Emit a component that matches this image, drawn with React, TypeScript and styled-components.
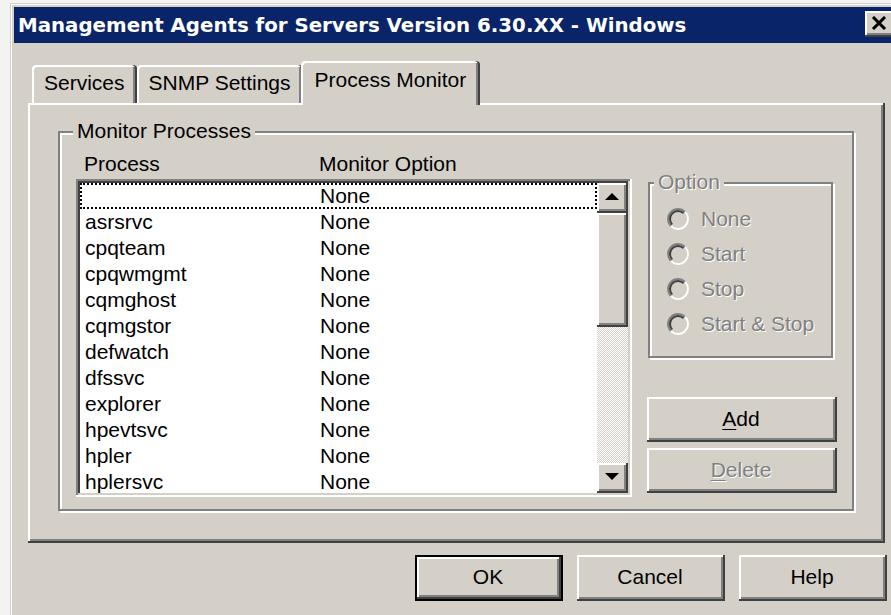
import React from "react";
import styled, { createGlobalStyle, css } from "styled-components";

const FACE = "#d4d0c8";
const SHADOW = "#808080";
const DARK = "#404040";
const HI = "#ffffff";

const GlobalStyle = createGlobalStyle`
  html, body {
    margin: 0;
    padding: 0;
    background: #f3f3f1;
    overflow: hidden;
  }
  #root {
    width: 891px;
    height: 615px;
    overflow: hidden;
  }
`;

const raised = css`
  box-shadow: inset -2px -2px 0 ${DARK}, inset 2px 2px 0 ${HI},
    inset -4px -4px 0 ${SHADOW};
`;

const sunken = css`
  box-shadow: inset -2px -2px 0 ${HI}, inset 2px 2px 0 ${SHADOW},
    inset -4px -4px 0 ${FACE}, inset 4px 4px 0 ${DARK};
`;

const disabledText = css`
  color: ${SHADOW};
  text-shadow: 1px 1px 0 ${HI};
`;

const Window = styled.div`
  box-sizing: border-box;
  margin: 3px 0 0 10px;
  width: 891px;
  height: 640px;
  padding: 4px;
  background: ${FACE};
  box-shadow: inset 1px 1px 0 ${FACE}, inset 2px 2px 0 ${HI};
  display: flex;
  flex-direction: column;
  font-family: "Liberation Sans", Arial, sans-serif;
  font-size: 21px;
  color: #000;
`;

const TitleBar = styled.div`
  flex: none;
  height: 36px;
  background: #0a246a;
  display: flex;
  align-items: flex-start;
  padding: 0 2px 0 4px;
`;

const TitleText = styled.span`
  flex: 1;
  align-self: center;
  color: #fff;
  font-family: "DejaVu Sans", Verdana, sans-serif;
  font-weight: bold;
  font-size: 19.8px;
  white-space: nowrap;
  overflow: hidden;
`;

const CloseButton = styled.div`
  flex: none;
  box-sizing: border-box;
  width: 30px;
  height: 26px;
  margin-top: 4px;
  background: ${FACE};
  ${raised};
  display: flex;
  align-items: center;
  justify-content: center;
  padding: 0 2px 2px 0;
`;

const Body = styled.div`
  flex: 1;
  display: flex;
  flex-direction: column;
  padding: 18px 10px 0 14px;
`;

const TabStrip = styled.div`
  height: 42px;
  display: flex;
  align-items: flex-end;
  padding-left: 4px;
`;

const Tab = styled.div<{ $active?: boolean }>`
  position: relative;
  z-index: ${(p) => (p.$active ? 2 : 1)};
  box-sizing: border-box;
  height: ${(p) => (p.$active ? 44 : 38)}px;
  margin: 0 ${(p) => (p.$active ? -2 : 0)}px ${(p) => (p.$active ? -2 : 0)}px;
  padding: 0 ${(p) => (p.$active ? 14 : 12)}px ${(p) => (p.$active ? 6 : 2)}px;
  background: ${FACE};
  border-radius: 4px 4px 0 0;
  box-shadow: inset -2px 0 0 ${DARK}, inset 2px 2px 0 ${HI},
    inset -4px 0 0 ${SHADOW};
  display: flex;
  align-items: center;
  justify-content: center;
  white-space: nowrap;
`;

const Panel = styled.div`
  box-sizing: border-box;
  height: 440px;
  margin-right: 2px;
  padding: 28px 0 0 30px;
  background: ${FACE};
  ${raised};
`;

const GroupBox = styled.div<{ $w: number; $h: number }>`
  position: relative;
  box-sizing: border-box;
  width: ${(p) => p.$w}px;
  height: ${(p) => p.$h}px;
  border: 2px solid ${SHADOW};
  box-shadow: 2px 2px 0 ${HI}, inset 2px 2px 0 ${HI};
`;

const GroupLabel = styled.span<{ $disabled?: boolean }>`
  position: absolute;
  top: -14px;
  left: ${(p) => (p.$disabled ? 4 : 13)}px;
  padding: 0 4px;
  line-height: 24px;
  background: ${FACE};
  white-space: nowrap;
  ${(p) => p.$disabled && disabledText};
`;

const ProcessArea = styled.div`
  display: grid;
  grid-template-columns: 556px 190px;
  grid-template-rows: auto 1fr;
  column-gap: 15px;
  padding: 19px 0 0 16px;
`;

const HeaderRow = styled.div`
  grid-column: 1 / 3;
  display: grid;
  grid-template-columns: 235px 1fr;
  padding-left: 8px;
  height: 24px;
  line-height: 24px;
  margin-bottom: 3px;
`;

const ListBox = styled.div`
  box-sizing: border-box;
  height: 318px;
  padding: 4px;
  background: #fff;
  ${sunken};
  display: flex;
`;

const Rows = styled.div`
  flex: 1;
  overflow: hidden;
`;

const Row = styled.div<{ $focused?: boolean }>`
  box-sizing: border-box;
  height: 26px;
  line-height: 26px;
  display: grid;
  grid-template-columns: 235px 1fr;
  padding-left: 5px;
  white-space: nowrap;
  ${(p) =>
    p.$focused &&
    css`
      outline: 2px dotted #000;
      outline-offset: -2px;
    `};
`;

const ScrollBar = styled.div`
  flex: none;
  width: 31px;
  display: flex;
  flex-direction: column;
  background-color: ${HI};
  background-image: repeating-conic-gradient(${FACE} 0 25%, ${HI} 0 50%);
  background-size: 2px 2px;
`;

const ScrollButton = styled.div`
  flex: none;
  box-sizing: border-box;
  height: 30px;
  background: ${FACE};
  ${raised};
  display: flex;
  align-items: center;
  justify-content: center;
  padding: 0 2px 2px 0;
`;

const Thumb = styled.div`
  flex: none;
  height: 114px;
  background: ${FACE};
  ${raised};
`;

const Track = styled.div`
  flex: 1;
`;

const SideColumn = styled.div`
  display: flex;
  flex-direction: column;
  padding-bottom: 4px;
`;

const OptionBox = styled(GroupBox)`
  margin: 3px 0 0 1px;
  padding: 17px 0 0 17px;
`;

const RadioRow = styled.div`
  height: 35px;
  display: flex;
  align-items: center;
  gap: 12px;
  white-space: nowrap;
  ${disabledText};
`;

const ButtonStack = styled.div`
  margin-top: auto;
  display: flex;
  flex-direction: column;
  gap: 6px;
`;

const Button = styled.button<{ $w: number; $h: number; $default?: boolean; $disabled?: boolean }>`
  appearance: none;
  box-sizing: border-box;
  width: ${(p) => p.$w}px;
  height: ${(p) => p.$h}px;
  margin: 0;
  padding: 0 2px 2px 0;
  border: ${(p) => (p.$default ? "2px solid #000" : "none")};
  background: ${FACE};
  ${raised};
  font: inherit;
  color: #000;
  display: flex;
  align-items: center;
  justify-content: center;
  cursor: default;
  ${(p) => p.$disabled && disabledText};

  u {
    text-decoration-thickness: 1px;
    text-underline-offset: 3px;
  }
`;

const Footer = styled.div`
  display: flex;
  justify-content: flex-end;
  gap: 14px;
  margin-top: 12px;
`;

const processes = [
  "",
  "asrsrvc",
  "cpqteam",
  "cpqwmgmt",
  "cqmghost",
  "cqmgstor",
  "defwatch",
  "dfssvc",
  "explorer",
  "hpevtsvc",
  "hpler",
  "hplersvc",
];

const options = ["None", "Start", "Stop", "Start & Stop"];

const CloseGlyph = () => (
  <svg width="16" height="14" viewBox="0 0 16 14">
    <path d="M2 1 L14 13 M14 1 L2 13" stroke="#000" strokeWidth="3" fill="none" />
  </svg>
);

const Arrow = ({ down }: { down?: boolean }) => (
  <svg width="14" height="8" viewBox="0 0 14 8">
    <path d={down ? "M0 0 H14 L7 7 Z" : "M7 0 L14 7 H0 Z"} fill="#000" />
  </svg>
);

const Radio = () => (
  <svg width="22" height="22" viewBox="0 0 22 22">
    <circle cx="11" cy="11" r="9" fill={FACE} />
    <path d="M3.93 18.07 A10 10 0 0 1 18.07 3.93" stroke={SHADOW} strokeWidth="2" fill="none" />
    <path d="M18.07 3.93 A10 10 0 0 1 3.93 18.07" stroke={HI} strokeWidth="2" fill="none" />
    <path d="M5.34 16.66 A8 8 0 0 1 16.66 5.34" stroke={DARK} strokeWidth="2" fill="none" />
    <path d="M16.66 5.34 A8 8 0 0 1 5.34 16.66" stroke={FACE} strokeWidth="2" fill="none" />
  </svg>
);

export default function App() {
  return (
    <>
      <GlobalStyle />
      <Window>
        <TitleBar>
          <TitleText>Management Agents for Servers Version 6.30.XX - Windows</TitleText>
          <CloseButton>
            <CloseGlyph />
          </CloseButton>
        </TitleBar>
        <Body>
          <TabStrip>
            <Tab>Services</Tab>
            <Tab>SNMP Settings</Tab>
            <Tab $active>Process Monitor</Tab>
          </TabStrip>
          <Panel>
            <GroupBox $w={796} $h={380}>
              <GroupLabel>Monitor Processes</GroupLabel>
              <ProcessArea>
                <HeaderRow>
                  <span>Process</span>
                  <span>Monitor Option</span>
                </HeaderRow>
                <ListBox>
                  <Rows>
                    {processes.map((name, i) => (
                      <Row key={i} $focused={i === 0}>
                        <span>{name}</span>
                        <span>None</span>
                      </Row>
                    ))}
                  </Rows>
                  <ScrollBar>
                    <ScrollButton>
                      <Arrow />
                    </ScrollButton>
                    <Thumb />
                    <Track />
                    <ScrollButton>
                      <Arrow down />
                    </ScrollButton>
                  </ScrollBar>
                </ListBox>
                <SideColumn>
                  <OptionBox $w={185} $h={176}>
                    <GroupLabel $disabled>Option</GroupLabel>
                    {options.map((o) => (
                      <RadioRow key={o}>
                        <Radio />
                        <span>{o}</span>
                      </RadioRow>
                    ))}
                  </OptionBox>
                  <ButtonStack>
                    <Button $w={190} $h={45}>
                      <span>
                        <u>A</u>dd
                      </span>
                    </Button>
                    <Button $w={190} $h={45} $disabled>
                      <span>
                        <u>D</u>elete
                      </span>
                    </Button>
                  </ButtonStack>
                </SideColumn>
              </ProcessArea>
            </GroupBox>
          </Panel>
          <Footer>
            <Button $w={148} $h={46} $default>
              OK
            </Button>
            <Button $w={148} $h={46}>
              Cancel
            </Button>
            <Button $w={148} $h={46}>
              Help
            </Button>
          </Footer>
        </Body>
      </Window>
    </>
  );
}
